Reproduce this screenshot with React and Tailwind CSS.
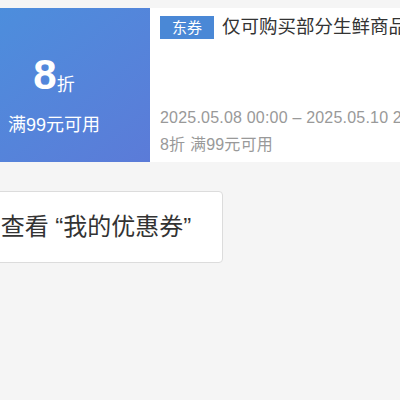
import React from 'react'

const font = { fontFamily: '"Liberation Sans", "Noto Sans CJK SC", sans-serif' }

const CouponCard = () => {
  return (
    <div className='flex h-[154px] bg-white'>
      <div className='shrink-0 w-[192px] -ml-[42px] flex flex-col items-center pt-[46px] bg-gradient-to-br from-[#4a90dd] to-[#5b7bd8] text-white'>
        <div className='flex items-end leading-none'>
          <span className='text-[42px] font-bold'>8</span>
          <span className='text-[18px] mb-[2px]'>折</span>
        </div>
        <p className='text-[18px] mt-[20px] leading-none'>满99元可用</p>
      </div>
      <div className='flex-1 min-w-0 flex flex-col pl-[10px] pt-[8px] pb-[4px]'>
        <div className='flex items-center gap-[8px] whitespace-nowrap'>
          <span className='bg-[#4a88d6] text-white text-[15px] h-[23px] leading-[23px] px-[12px] shrink-0'>东券</span>
          <span className='text-[18.5px] text-[#333] leading-none'>仅可购买部分生鲜商品</span>
        </div>
        <div className='mt-auto text-[16px] text-[#999] whitespace-nowrap leading-[27px] tracking-[0.2px]'>
          <p>2025.05.08 00:00 – 2025.05.10 23:59</p>
          <p>8折 满99元可用</p>
        </div>
      </div>
    </div>
  )
}

export default function App() {
  return (
    <div style={font} className='w-[400px] h-[400px] overflow-hidden bg-[#f5f5f5] pt-[8px]'>
      <CouponCard />
      <div className='mt-[29px] -ml-[31px] w-[254px] h-[72px] bg-white border border-[#dcdcdc] rounded-[4px] flex items-center justify-center'>
        <span className='text-[24px] text-[#333]'>查看 “我的优惠券”</span>
      </div>
    </div>
  )
}
